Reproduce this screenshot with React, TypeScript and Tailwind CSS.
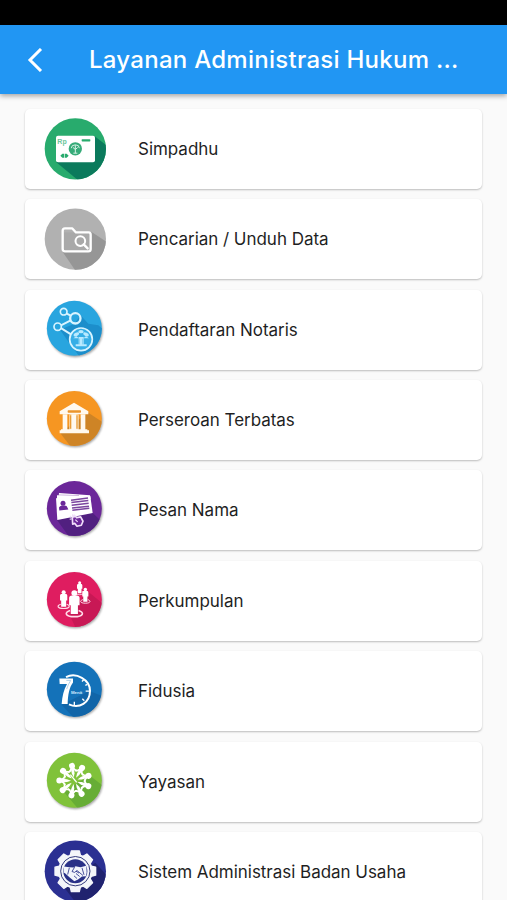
import type { ReactNode } from 'react';

interface DiscProps {
  id: string;
  color: string;
  shade: string;
  shadow: string;
  cy?: number;
  big?: boolean;
  children: ReactNode;
}

function Disc({ id, color, shade, shadow, children, cy = 114, big = false }: DiscProps) {
  const cx = big ? 121 : 118;
  const r = big ? 92 : 82.5;
  return (
    <>
      <defs>
        <clipPath id={id}><circle cx={cx} cy={cy} r={r} /></clipPath>
        <filter id={id + 'f'} x="-20%" y="-20%" width="140%" height="140%"><feGaussianBlur stdDeviation="3" /></filter>
      </defs>
      {!big && <circle cx={cx + 3} cy={cy + 4} r={r} fill="#000" opacity="0.36" filter={`url(#${id}f)`} />}
      <circle cx={cx} cy={cy} r={r} fill={color} />
      <path d={shade} fill={shadow} clipPath={`url(#${id})`} />
      {children}
    </>
  );
}

function Money() {
  return (
    <Disc id="money" big cy={116} color="#28ab6d" shadow="#0b7a5c" shade="M179 78L240 125V240H165L64 156Z">
      <rect x="63" y="77" width="117" height="79" rx="6" fill="#fff" />
      <text x="67" y="101" fontSize="21" fontWeight="700" fill="#6cc69c" className="font-['Liberation_Sans',sans-serif]">Rp</text>
      <rect x="140" y="87" width="26" height="7" rx="2" fill="#28ab6d" />
      <circle cx="121" cy="116" r="20" fill="#36ab79" />
      <path d="M109 114a12 10 0 0 1 24 0M121 105v24M115 129h12M114 112l7 6 7-6" stroke="#d9f2e6" strokeWidth="3" fill="none" />
      <path d="M76 137l6-6h6v12h-6zM101 137l-6-6h-5v12h5z" fill="#28ab6d" />
    </Disc>
  );
}

function FolderSearch() {
  return (
    <Disc id="folder" big cy={118} color="#b1b1b1" shadow="#969696" shade="M169 96L230 136V240H140L82 155Z">
      <rect x="84" y="98" width="84" height="56" fill="#a9a9a9" />
      <path d="M83 147V93q0-7 7-7h22l11 12h38q6 0 6 7v43q0 7-7 7H90q-7 0-7-8z" fill="none" stroke="#fff" strokeWidth="7" strokeLinejoin="round" />
      <circle cx="136" cy="124" r="14.500" fill="none" stroke="#fff" strokeWidth="6" />
      <path d="M146 134l12 12" stroke="#fff" strokeWidth="7" strokeLinecap="round" />
    </Disc>
  );
}

function Network() {
  return (
    <Disc id="network" color="#28a5df" shadow="#1c8ecb" shade="M137 75L160 100 190 105 230 140V220H150L107 164 75 118 118 100Z">
      <g fill="none" stroke="#d8f4ff" strokeWidth="5">
        <path d="M94 69l13 7M78 105l29-15M78 113l30 19" strokeWidth="6" />
        <circle cx="86" cy="64" r="10" />
        <circle cx="121" cy="84" r="15.500" strokeWidth="7" />
        <circle cx="68" cy="109" r="11" />
        <circle cx="138" cy="147" r="34" strokeWidth="5" fill="#36aee6" />
      </g>
      <g fill="#b9eaff">
        <path d="M131 140h15v22h9v6h-33v-6h9z" />
        <ellipse cx="138" cy="124" rx="8" ry="5" />
        <ellipse cx="124" cy="132" rx="9" ry="5" transform="rotate(-25 124 132)" />
        <ellipse cx="153" cy="132" rx="9" ry="5" transform="rotate(25 153 132)" />
        <path d="M115 144l9-6 8 6zM145 144l8-6 9 6z" />
      </g>
      <path d="M133 145v17M143 145v17" stroke="#48b2e2" strokeWidth="1.500" />
    </Disc>
  );
}

function Bank() {
  return (
    <Disc id="bank" cy={115.5} color="#f69622" shadow="#ce8426" shade="M160 98L230 145V230H130L75 158Z">
      <g fill="#fff9ef">
        <path d="M117 68L160 94V103H74V94Z" />
        <rect x="83" y="103" width="14" height="48" />
        <rect x="103" y="103" width="28" height="48" fill="#fbe6c4" />
        <rect x="109" y="103" width="15" height="48" />
        <rect x="137" y="103" width="14" height="48" />
        <path d="M78 148h79v3h5v9H74v-9h4z" />
      </g>
      <rect x="98" y="91" width="40" height="7" rx="2" fill="#ec952b" />
      <path d="M107 106v40M126 106v40" stroke="#e8962c" strokeWidth="3.500" />
    </Disc>
  );
}

function Cards() {
  return (
    <Disc id="cards" cy={117} color="#6b2799" shadow="#512080" shade="M173 130L205 160V240H130L66 151Z">
      <path d="M72 70l93 7 2 11-96-7zM66 77l100 5v5l-100 4z" fill="#fff" />
      <path d="M72 76l60 2" stroke="#b794cd" strokeWidth="2" />
      <path d="M63 86L166 79 173 130 67 151Z" fill="#fff" />
      <circle cx="84" cy="101" r="7.500" fill="#6b2799" />
      <path d="M73 123l-1-9q2-5 9-6h8q7 0 9 7l2 5z" fill="#6b2799" />
      <path d="M108 92l51-7M109 99l51-6M110 107l51-6M111 115l51-5M112 122l51-6" stroke="#7b459f" strokeWidth="4.500" />
      <path d="M112 145l1 19 6-3 7 9 13-3 5-12-7-13-12 2-7-7z" fill="#6b2799" stroke="#f1dffa" strokeWidth="5" strokeLinejoin="round" />
      <path d="M105 139l4 5M113 134v6M120 139l-3 5M104 149l6-1M121 150l7 7" stroke="#eedcf8" strokeWidth="3.500" />
    </Disc>
  );
}

function Person({ x, y, s }: { x: number; y: number; s: number }) {
  return (
    <g transform={`translate(${x} ${y}) scale(${s})`}>
      <circle cx="0" cy="9" r="9" fill="#fff" />
      <path d="M-7 16H7Q16 17 16 24V46H11V73H-11V46H-16V24Q-16 17-7 16Z" fill="#fff" />
      <path d="M-13 62C-32 68-28 81 0 81S32 68 13 62" fill="none" stroke="#ffdce9" strokeWidth="5" />
    </g>
  );
}

function People() {
  return (
    <Disc id="people" cy={118} color="#df1d60" shadow="#c81855" shade="M158 93L215 140V220H130L103 163Z">
      <Person x={134} y={63} s={0.5} />
      <Person x={151} y={83} s={0.57} />
      <Person x={86} y={90} s={0.68} />
      <Person x={118} y={90} s={0.98} />
    </Disc>
  );
}

function SevenMinutes() {
  return (
    <Disc id="seven" cy={118.5} color="#1472b9" shadow="#1165a8" shade="M163 124L205 140V230H140L80 165Z">
      <path d="M93 82C124 66 165 90 165 123c0 36-32 55-63 41" fill="none" stroke="#fff" strokeWidth="6" />
      <path d="M146 90l-5 5M165 124h-13M148 153l-6-6M118 169v-13M157 104l-6 3" stroke="#fff" strokeWidth="4" />
      <path d="M73 86H114V98C103 113 99 133 98 163H80C82 139 86 121 96 103H74Z" fill="#fff" />
      <path d="M94 92h13q-8 13-12 26" stroke="#91bfe0" strokeWidth="2" fill="none" />
      <text x="108" y="132" fontSize="13" fontWeight="700" fill="#d3edff" className="font-['Liberation_Sans',sans-serif]">Menit</text>
    </Disc>
  );
}

const spokes = [0, 40, 80, 120, 160, 200, 240, 280, 320];

function Community() {
  return (
    <Disc id="community" cy={120} color="#80c23a" shadow="#67ad36" shade="M163 105L215 145V230H150L87 155Z">
      {spokes.map((a) => (
        <g key={a} transform={`rotate(${a - 9} 118 121)`}>
          <circle cx="118" cy="76" r="9" fill="#fff" />
          <path d="M114 84h8l3 5 7 5" fill="none" stroke="#fff" strokeWidth="5" />
          <path d="M122 84h-8l-3 5-7 5" fill="none" stroke="#fff" strokeWidth="5" />
          <path d="M113 84h10l-1 15-4 12-4-12z" fill="#fff" />
        </g>
      ))}
      <path d="M106 103l19 23" stroke="#fff" strokeWidth="4" />
    </Disc>
  );
}

const teeth = [0, 45, 90, 135, 180, 225, 270, 315];

function Handshake() {
  return (
    <Disc id="shake" big cy={116} color="#2b3092" shadow="#20236f" shade="M181 91L240 155V240H145L80 155Z">
      {teeth.map((a) => (
        <path key={a} d="M105 71L109 55H133L137 71Z" fill="#f4f6fa" stroke="#f4f6fa" strokeWidth="4" strokeLinejoin="round" transform={`rotate(${a} 121 116)`} />
      ))}
      <circle cx="121" cy="116" r="52" fill="#f4f6fa" />
      <circle cx="121" cy="116" r="44" fill="none" stroke="#333a7c" strokeWidth="3" />
      <circle cx="121" cy="116" r="36" fill="#293187" />
      <path d="M87 102l16 2 13 1 6-4 14 3 18-4 1 20-2 11-12 1-12 9-11 5-13-10-15-14-4-2z" fill="#f2f5fb" />
      <path d="M103 106l-5 20M119 104l-8 13q8 7 15-3l18 15M132 122l-9-6M134 132l-11-9M126 138l-9-8M141 106l6 21" fill="none" stroke="#293187" strokeWidth="2.500" />
    </Disc>
  );
}

const services = [
  { name: 'Simpadhu', icon: <Money />, view: '0 -3.5 240 240' },
  { name: 'Pencarian / Unduh Data', icon: <FolderSearch />, view: '0 -2.3 240 240' },
  { name: 'Pendaftaran Notaris', icon: <Network />, view: '0 -1.1 240 240' },
  { name: 'Perseroan Terbatas', icon: <Bank />, view: '0 0.1 240 240' },
  { name: 'Pesan Nama', icon: <Cards />, view: '0 1.3 240 240' },
  { name: 'Perkumpulan', icon: <People />, view: '0 2.5 240 240' },
  { name: 'Fidusia', icon: <SevenMinutes />, view: '0 3.7 240 240' },
  { name: 'Yayasan', icon: <Community />, view: '0 4.9 240 240' },
  { name: 'Sistem Administrasi Badan Usaha', icon: <Handshake />, view: '0 -1.5 240 240' },
];

export default function App() {
  return (
    <div className="flex h-[900px] w-full flex-col overflow-hidden bg-[#fafafa] font-['Inter','Liberation_Sans',sans-serif]">
      <div className="h-[25px] shrink-0 bg-black" />
      <header className="z-10 flex h-[69px] shrink-0 items-center bg-[#2196f3] text-white shadow-[0_2px_5px_rgba(0,0,0,0.35)]">
        <svg className="ml-[25px] h-6 w-5 shrink-0" viewBox="0 0 20 24" fill="none" stroke="currentColor" strokeWidth="3">
          <path d="M16 1L5 12L16 23" />
        </svg>
        <h1 className="ml-[44px] whitespace-nowrap text-[24px] font-medium leading-8 tracking-[0.27px]">Layanan Administrasi Hukum ...</h1>
      </header>
      <main className="flex flex-col gap-[10.4px] px-[25px] pt-[14.8px]">
        {services.map((s) => (
          <section key={s.name} className="flex h-[80px] shrink-0 items-center rounded-[5px] bg-white shadow-[0_1px_2px_rgba(0,0,0,0.25)]">
            <svg className="ml-[10px] size-[80px] shrink-0" viewBox={s.view}>{s.icon}</svg>
            <span className="ml-[23px] whitespace-nowrap text-[17px] leading-6 tracking-[-0.03px] text-[#1f1f1f]">{s.name}</span>
          </section>
        ))}
      </main>
    </div>
  );
}
